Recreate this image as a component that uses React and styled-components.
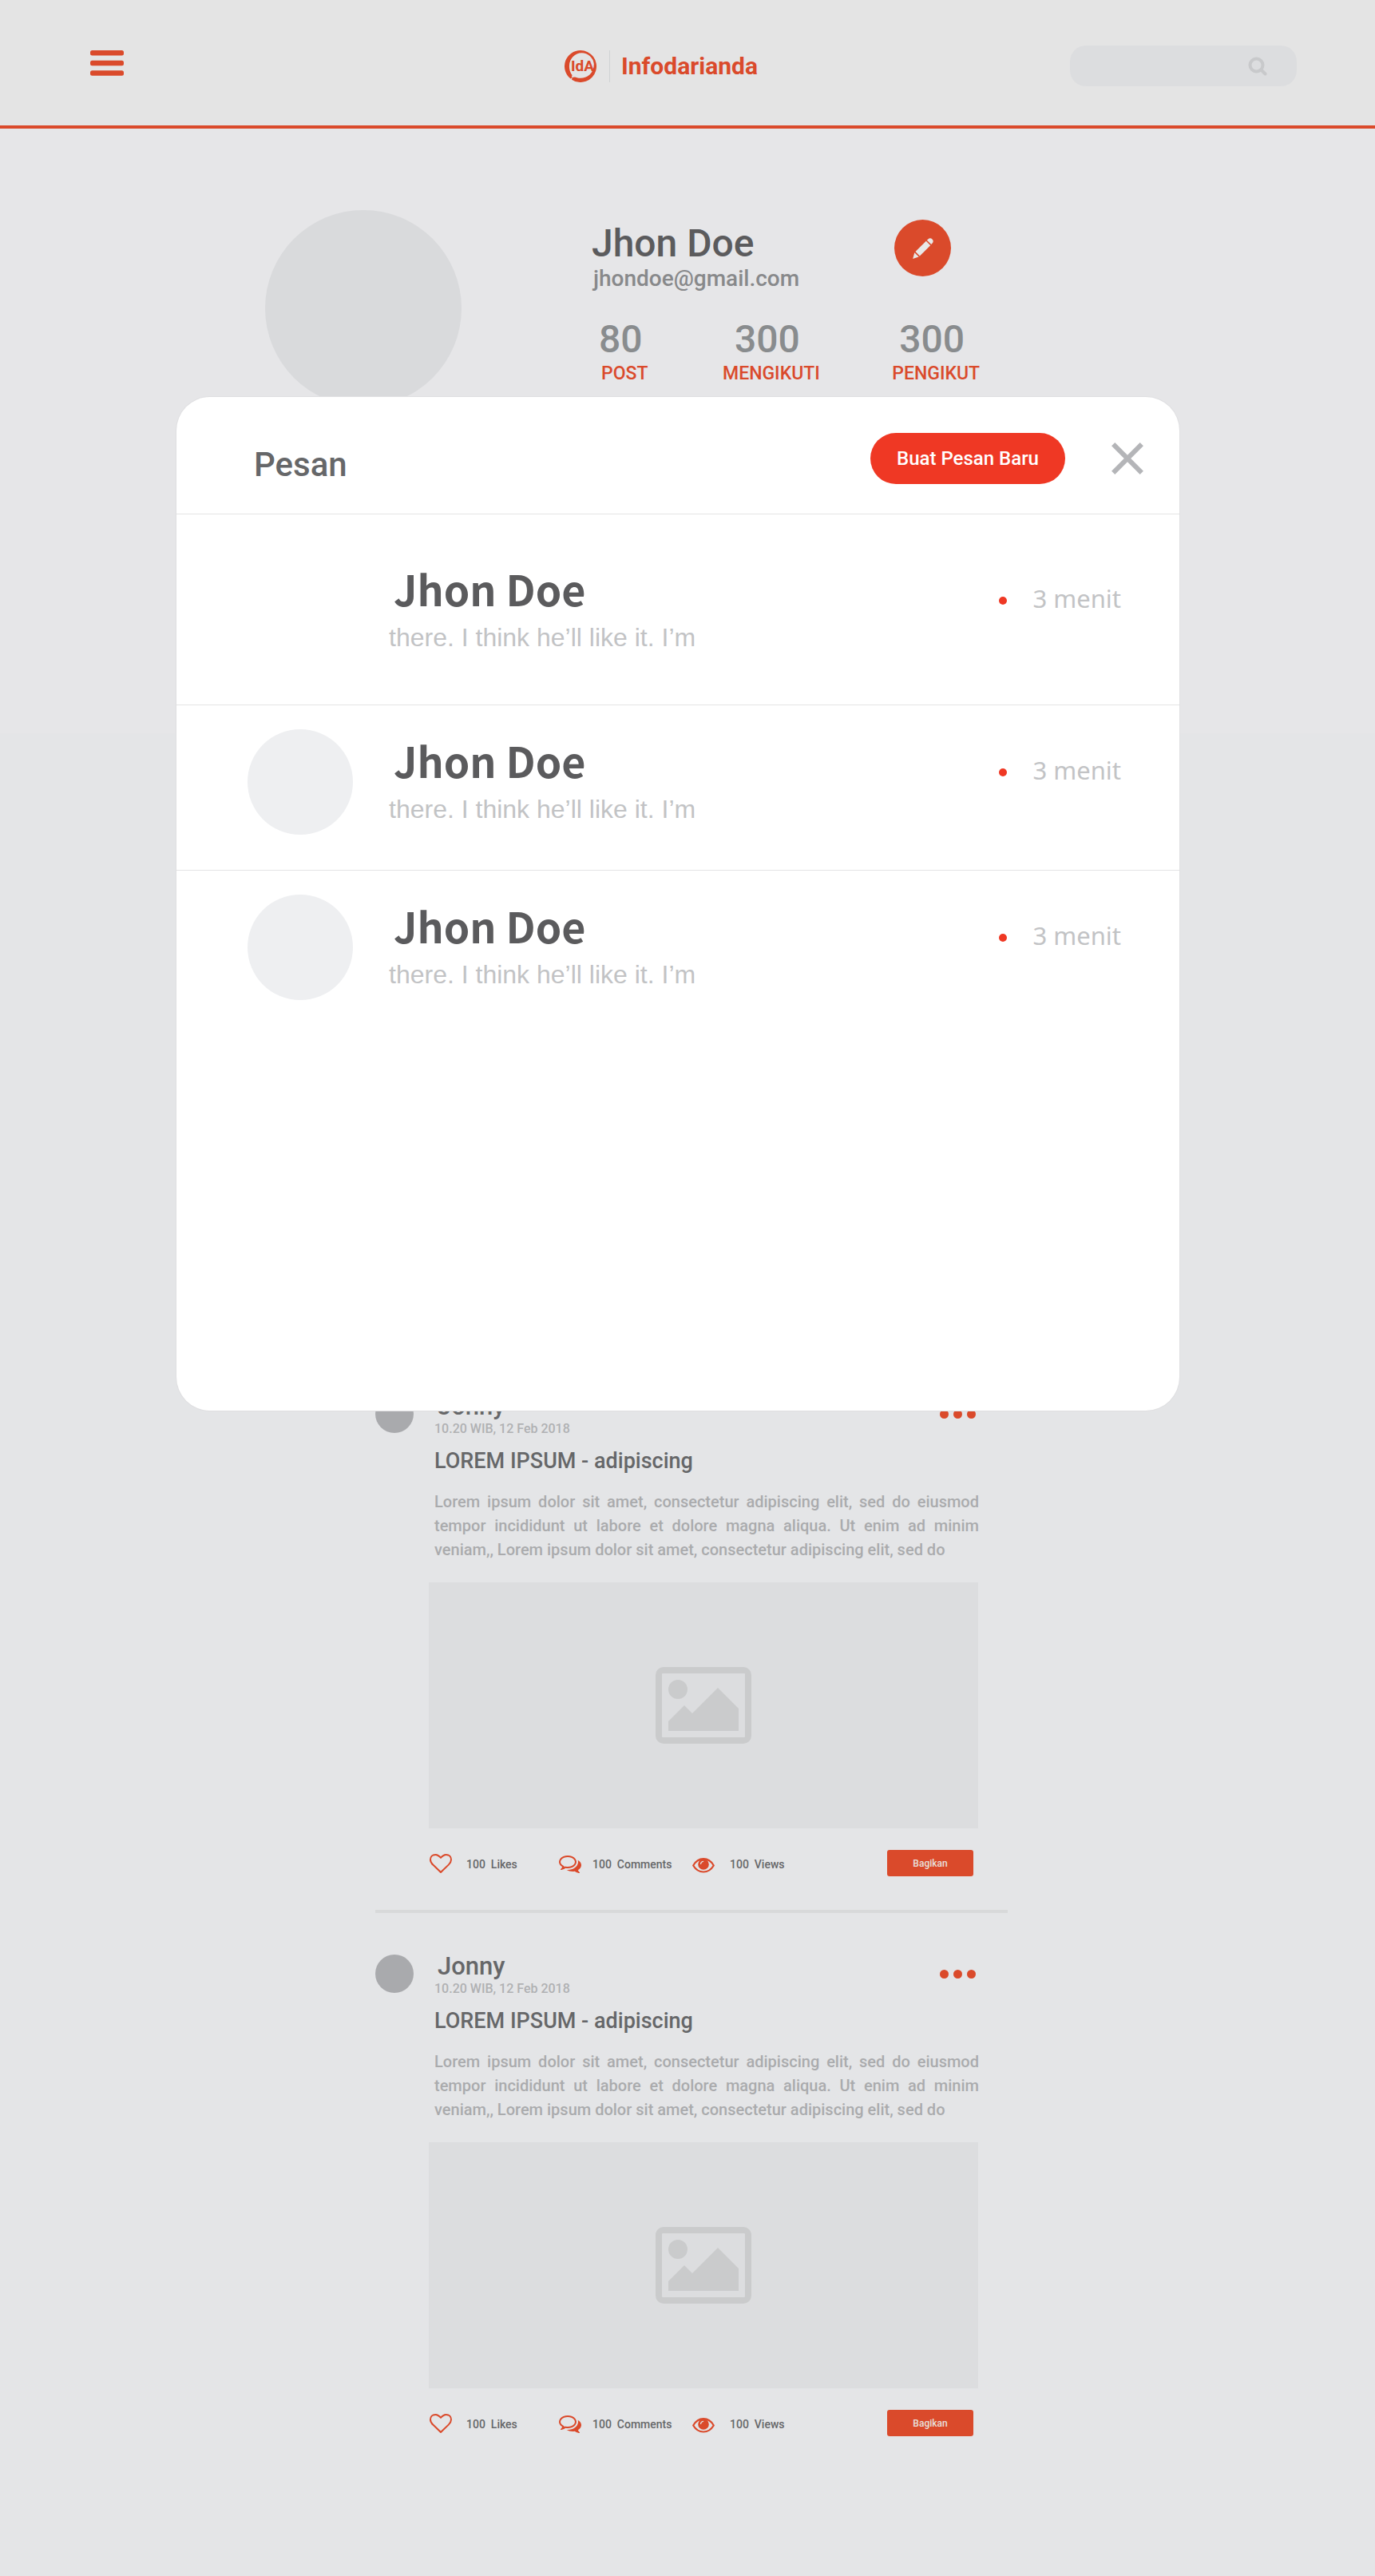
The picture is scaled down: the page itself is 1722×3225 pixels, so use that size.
import React from "react";
import styled, { createGlobalStyle } from "styled-components";

const color = {
  brand: "#da4a2b",
  brandBright: "#ef3824",
  ink: "#5b5b5d",
  inkSoft: "#666769",
  muted: "#88898b",
  faint: "#aaabad",
  pale: "#c2c3c5",
  panel: "#dcdddf",
};

const GlobalStyle = createGlobalStyle`
  *, *::before, *::after { box-sizing: border-box; }
  body {
    margin: 0;
    background: #e4e5e7;
    font-family: Roboto, "Liberation Sans", sans-serif;
    color: ${color.inkSoft};
  }
  h1, h2, h3, p, ul, dl, dd { margin: 0; padding: 0; }
  ul { list-style: none; }
  button, input { font-family: inherit; border: 0; padding: 0; }
  button { cursor: pointer; background: none; }
  svg { display: block; }
`;

const Page = styled.div`
  position: relative;
`;

/* Top bar */

const TopBar = styled.header`
  display: grid;
  grid-template-columns: 594px 1fr 284px;
  align-items: center;
  height: 161px;
  padding: 8px 98px 0 113px;
  background: #e4e4e4;
  border-bottom: 4px solid ${color.brand};
`;

const MenuButton = styled.button`
  justify-self: start;
  margin-bottom: 7px;
  color: ${color.brand};
`;

const Brand = styled.a`
  display: flex;
  align-items: center;
  justify-self: start;
  gap: 16px;
  color: ${color.brand};
  text-decoration: none;
`;

const BrandName = styled.span`
  padding-left: 14px;
  border-left: 1px solid #cfd3d4;
  font-size: 30px;
  font-weight: 700;
  line-height: 40px;
`;

const SearchForm = styled.form`
  display: flex;
  align-items: center;
  height: 51px;
  padding: 0 37px 0 20px;
  border-radius: 20px;
  background: ${color.panel};
`;

const SearchInput = styled.input`
  flex: 1;
  min-width: 0;
  height: 100%;
  background: transparent;
  outline: none;
  font-size: 20px;
  color: ${color.inkSoft};
`;

const IconButton = styled.button`
  color: ${(p) => p.$color};
`;

/* Profile */

const Profile = styled.section`
  display: flex;
  align-items: flex-start;
  min-height: 757px;
  padding: 102px 332px 0;
  background: #e6e6e8;
`;

const Circle = styled.div`
  flex: none;
  width: ${(p) => p.$size}px;
  height: ${(p) => p.$size}px;
  border-radius: 50%;
  background: ${(p) => p.$fill};
`;

const ProfileInfo = styled.div`
  display: flex;
  flex-direction: column;
  width: 486px;
  margin-left: 163px;
  padding-top: 12px;
`;

const ProfileHead = styled.div`
  display: flex;
  justify-content: space-between;
  padding-right: 36px;
`;

const ProfileName = styled.h1`
  margin-top: 2px;
  font-size: 48px;
  font-weight: 500;
  line-height: 56px;
  color: ${color.ink};
`;

const Email = styled.p`
  padding-left: 2px;
  font-size: 28px;
  font-weight: 500;
  line-height: 32px;
  color: ${color.muted};
`;

const EditButton = styled.button`
  display: grid;
  place-items: center;
  width: 71px;
  height: 71px;
  border-radius: 50%;
  background: ${color.brand};
  color: #e8e8e8;
`;

const Stats = styled.dl`
  display: flex;
  justify-content: space-between;
  padding-left: 9px;
  margin-top: 32px;
`;

const Stat = styled.div`
  display: flex;
  flex-direction: column-reverse;
  align-items: center;
`;

const StatLabel = styled.dt`
  font-size: 23px;
  font-weight: 500;
  line-height: 30px;
  color: ${color.brand};
`;

const StatValue = styled.dd`
  padding-right: 10px;
  font-size: 48px;
  font-weight: 500;
  line-height: 56px;
  color: #898c8e;
`;

/* Feed */

const Feed = styled.main`
  padding: 828px 0 175px 10px;
`;

const FeedList = styled.div`
  display: flex;
  flex-direction: column;
  max-width: 792px;
  margin: 0 auto;
`;

const Post = styled.article`
  display: flex;
  gap: 19px;
  padding-right: 37px;

  & + & {
    margin-top: 42px;
    padding-top: 52px;
    border-top: 4px solid #d8d9da;
  }
`;

const PostMain = styled.div`
  flex: 1;
  min-width: 0;
`;

const PostHead = styled.div`
  display: flex;
  align-items: center;
  justify-content: space-between;
  padding: 0 3px 0 7px;
`;

const Author = styled.h2`
  padding-left: 4px;
  font-size: 31px;
  font-weight: 500;
  line-height: 30px;
`;

const PostDate = styled.p`
  margin-top: 4px;
  font-size: 16px;
  font-weight: 500;
  line-height: 18px;
  color: #b0b1b3;
`;

const MoreButton = styled.button`
  display: flex;
  gap: 6px;
  margin-bottom: 3px;
`;

const PostTitle = styled.h3`
  margin-top: 15px;
  padding-left: 7px;
  font-size: 27px;
  font-weight: 500;
  line-height: 32px;
`;

const PostText = styled.p`
  margin-top: 20px;
  padding-left: 7px;
  margin-right: -1px;
  font-size: 20px;
  font-weight: 500;
  line-height: 30px;
  text-align: justify;
  color: ${color.faint};
`;

const PostImage = styled.div`
  display: grid;
  place-items: center;
  height: 308px;
  margin-top: 26px;
  background: ${color.panel};
  color: #cacbcc;
`;

const Actions = styled.div`
  display: flex;
  align-items: center;
  height: 33px;
  margin-top: 27px;
  padding-right: 6px;
`;

const Action = styled.button`
  display: flex;
  align-items: center;
  gap: ${(p) => p.$gap}px;
  width: ${(p) => p.$width}px;
  padding-left: 1px;
  color: ${color.brand};
`;

const ActionText = styled.span`
  padding-top: 2px;
  font-size: 14px;
  font-weight: 500;
  line-height: 18px;
  white-space: pre;
  color: ${color.inkSoft};
`;

const ShareButton = styled.button`
  width: 108px;
  height: 33px;
  margin-left: auto;
  border-radius: 3px;
  background: ${color.brand};
  font-size: 12px;
  font-weight: 500;
  color: #e8e0de;
`;

/* Message dialog */

const DialogLayer = styled.div`
  position: absolute;
  inset: 0;
  padding: 497px 245px 0 221px;
`;

const Dialog = styled.section`
  min-height: 1269px;
  border-radius: 42px;
  background: #fff;
  box-shadow: 0 0 0 1px #dfdfe1;
`;

const DialogHead = styled.div`
  display: flex;
  align-items: center;
  height: 146px;
  padding: 7px 45px 0 97px;
`;

const DialogTitle = styled.h2`
  flex: 1;
  padding-top: 16px;
  font-size: 42px;
  font-weight: 500;
  line-height: 48px;
`;

const NewMessageButton = styled.button`
  width: 244px;
  height: 64px;
  margin-right: 58px;
  border-radius: 32px;
  background: ${color.brandBright};
  font-size: 24px;
  font-weight: 500;
  color: #fff;
`;

const Message = styled.li`
  display: flex;
  align-items: flex-start;
  padding: ${(p) => (p.$tall ? "54px 73px 52px 89px" : "30px 73px 44px 89px")};
  border-top: 1px solid #e4e4e5;
`;

const MessageBody = styled.div`
  flex: 1;
  min-width: 0;
  padding: 9px 0 0 45px;
`;

const Sender = styled.h3`
  padding-left: 6px;
  font-family: "Noto Sans CJK SC", "Noto Sans", sans-serif;
  font-size: 52px;
  font-weight: 700;
  line-height: 60px;
  color: ${color.ink};
`;

const Excerpt = styled.p`
  margin-top: 11px;
  font-family: "Liberation Sans", sans-serif;
  font-size: 32px;
  line-height: 40px;
  color: ${color.pale};
`;

const MessageTime = styled.div`
  display: flex;
  align-items: center;
  gap: 32px;
  padding-top: 31px;
  font-family: "Noto Sans", sans-serif;
  font-size: 31px;
  line-height: 40px;
  color: ${color.pale};
`;

const UnreadDot = styled.span`
  width: 10px;
  height: 10px;
  margin-top: 6px;
  border-radius: 50%;
  background: ${color.brandBright};
`;

/* Icons */

const MenuIcon = () => (
  <svg width="42" height="32" viewBox="0 0 42 32" fill="currentColor" aria-hidden="true">
    <rect width="42" height="6.6" rx="2.5" />
    <rect y="12.7" width="42" height="6.6" rx="2.5" />
    <rect y="25.2" width="42" height="6.6" rx="2.5" />
  </svg>
);

const LogoMark = () => (
  <svg width="40" height="40" viewBox="0 0 40 40" aria-hidden="true">
    <path
      fill="currentColor"
      fillRule="evenodd"
      d="M20 0A20 20 0 1 1 9 36.700L10 33.500L7.500 35.600A20 20 0 0 1 20 0ZM21.500 3.200A16 16 0 0 0 6 19Q5.500 26 9.500 31L8.800 35Q12 32.500 15.500 34.200Q24 36.500 31.500 30.500Q37 25 36.800 17A15.500 15.500 0 0 0 21.500 3.200Z"
    />
    <text x="8" y="26" fill="currentColor" fontFamily="Roboto, sans-serif" fontSize="19" fontWeight="700">
      IdA
    </text>
  </svg>
);

const SearchIcon = () => (
  <svg width="24" height="24" viewBox="0 0 24 24" fill="none" stroke="currentColor" strokeWidth="4" aria-hidden="true">
    <circle cx="10.500" cy="10.500" r="8" />
    <path d="M16.500 16.500l5 5" strokeLinecap="round" />
  </svg>
);

const PencilIcon = () => (
  <svg width="28" height="28" viewBox="0 0 28 28" fill="currentColor" aria-hidden="true">
    <path d="M20.300 2.500Q23 0 25.500 2.500T25.400 7.800L24.300 8.900L18.800 3.700Z" />
    <path d="M17.800 4.800L23.200 10.200L9.900 23.500L4.500 18.100Z" />
    <path d="M3.300 19.200L8.700 24.600L1.200 27Z" />
  </svg>
);

const HeartIcon = () => (
  <svg width="28" height="28" viewBox="0 0 1792 1792" fill="currentColor" aria-hidden="true">
    <path d="M1664 596q0-81-21.5-143t-55-98.5-81.5-59.5-94-31-98-8-112 25.5-110.500 64-86.500 72-60 61.500q-18 22-49 22t-49-22q-24-28-60-61.500t-86.500-72-110.500-64-112-25.500-98 8-94 31-81.500 59.500-55 98.500-21.500 143q0 168 187 355l581 560 580-559q188-188 188-356zm128 0q0 221-229 450l-623 600q-18 18-44 18t-44-18l-624-602q-10-8-27.500-26t-55.500-65.500-68-97.500-53.500-121-23.500-138q0-220 127-344t351-124q62 0 126.500 21.500t120 58 95.500 68.500 76 68q36-36 76-68t95.500-68.500 120-58 126.500-21.500q224 0 351 124t127 344z" />
  </svg>
);

const CommentsIcon = () => (
  <svg width="28" height="28" viewBox="0 0 1792 1792" fill="currentColor" aria-hidden="true">
    <path d="M704 384q-153 0-286 52t-211.500 141-78.500 191q0 82 53 158t149 132l97 56-35 84q34-20 62-39l44-31 53 10q78 14 153 14 153 0 286-52t211.500-141 78.500-191-78.500-191-211.500-141-286-52zm0-128q191 0 353.500 68.500t256.500 186.500 94 257-94 257-256.500 186.500-353.500 68.500q-86 0-176-16-124 88-278 128-36 9-86 16h-3q-11 0-20.500-8t-11.500-21q-1-3-1-6.500t.5-6.500 2-6l2.500-5 3.500-5.500 4-5 4.500-5 4-4.500q5-6 23-25t26-29.500 22.500-29 25-38.500 20.500-44q-124-72-195-177t-71-224q0-139 94-257t256.500-186.500 353.500-68.500zm822 1169q10 24 20.500 44t25 38.500 22.500 29 26 29.500 23 25q1 1 4 4.500t4.500 5 4 5 3.500 5.500l2.500 5 2 6 .5 6.500-1 6.500q-3 14-13 22t-22 7q-50-7-86-16-154-40-278-128-90 16-176 16-271 0-472-132 58 4 88 4 161 0 309-45t264-129q125-92 192-212t67-254q0-77-23-152 129 71 204 178t75 230q0 120-71 224.500t-195 176.500z" />
  </svg>
);

const EyeIcon = () => (
  <svg width="28" height="28" viewBox="0 0 28 28" fill="none" stroke="currentColor" aria-hidden="true">
    <path d="M1.200 16.500Q6 8.200 14 8.200T26.800 16.500Q22 24.500 14 24.500T1.200 16.500Z" strokeWidth="2.200" strokeLinejoin="round" />
    <circle cx="14" cy="15" r="6.800" fill="currentColor" stroke="none" />
    <path d="M10.600 14.500Q10.800 11.700 13.600 11.300" stroke="#e4e5e7" strokeWidth="1.200" strokeLinecap="round" />
  </svg>
);

const PictureIcon = () => (
  <svg width="120" height="96" viewBox="0 0 120 96" fill="currentColor" aria-hidden="true">
    <path fillRule="evenodd" d="M10 0H110A10 10 0 0 1 120 10V86A10 10 0 0 1 110 96H10A10 10 0 0 1 0 86V10A10 10 0 0 1 10 0ZM9 8Q8 8 8 9V87Q8 88 9 88H111Q112 88 112 87V9Q112 8 111 8Z" />
    <circle cx="28" cy="28" r="12" />
    <path d="M16 68L36 48L46 58L78 26L104 52V80H16Z" />
  </svg>
);

const CloseIcon = () => (
  <svg width="40" height="40" viewBox="0 0 40 40" fill="none" stroke="currentColor" strokeWidth="6" aria-hidden="true">
    <path d="M2.200 2.200L37.800 37.800M37.800 2.200L2.200 37.800" />
  </svg>
);

/* Data */

const stats = [
  { label: "POST", value: 80 },
  { label: "MENGIKUTI", value: 300 },
  { label: "PENGIKUT", value: 300 },
];

const actions = [
  { Icon: HeartIcon, text: "100  Likes", gap: 18, width: 162 },
  { Icon: CommentsIcon, text: "100  Comments", gap: 14, width: 167 },
  { Icon: EyeIcon, text: "100  Views", gap: 19, width: 130 },
];

const posts = [1, 2];

const messages = [
  { id: 1, tall: true, avatar: "transparent" },
  { id: 2, avatar: "#eeeff1" },
  { id: 3, avatar: "#eeeff1" },
];

function PostCard() {
  return (
    <Post>
      <Circle $size={48} $fill="#a9aaad" />
      <PostMain>
        <PostHead>
          <div>
            <Author>Jonny</Author>
            <PostDate>10.20 WIB, 12 Feb 2018</PostDate>
          </div>
          <MoreButton type="button" aria-label="Lainnya">
            {[0, 1, 2].map((n) => (
              <Circle key={n} as="span" $size={11} $fill={color.brand} />
            ))}
          </MoreButton>
        </PostHead>
        <PostTitle>LOREM IPSUM - adipiscing</PostTitle>
        <PostText>
          Lorem ipsum dolor sit amet, consectetur adipiscing elit, sed do eiusmod tempor incididunt ut
          labore et dolore magna aliqua. Ut enim ad minim veniam,, Lorem ipsum dolor sit amet,
          consectetur adipiscing elit, sed do
        </PostText>
        <PostImage>
          <PictureIcon />
        </PostImage>
        <Actions>
          {actions.map(({ Icon, text, gap, width }) => (
            <Action key={text} type="button" $gap={gap} $width={width}>
              <Icon />
              <ActionText>{text}</ActionText>
            </Action>
          ))}
          <ShareButton type="button">Bagikan</ShareButton>
        </Actions>
      </PostMain>
    </Post>
  );
}

export default function App() {
  return (
    <Page>
      <GlobalStyle />
      <TopBar>
        <MenuButton type="button" aria-label="Menu">
          <MenuIcon />
        </MenuButton>
        <Brand href="#">
          <LogoMark />
          <BrandName>Infodarianda</BrandName>
        </Brand>
        <SearchForm role="search">
          <SearchInput type="search" aria-label="Cari" />
          <IconButton type="submit" aria-label="Cari" $color="#c8c9cb">
            <SearchIcon />
          </IconButton>
        </SearchForm>
      </TopBar>

      <Profile>
        <Circle $size={246} $fill="#d9dadc" />
        <ProfileInfo>
          <ProfileHead>
            <div>
              <ProfileName>Jhon Doe</ProfileName>
              <Email>jhondoe@gmail.com</Email>
            </div>
            <EditButton type="button" aria-label="Ubah profil">
              <PencilIcon />
            </EditButton>
          </ProfileHead>
          <Stats>
            {stats.map((s) => (
              <Stat key={s.label}>
                <StatLabel>{s.label}</StatLabel>
                <StatValue>{s.value}</StatValue>
              </Stat>
            ))}
          </Stats>
        </ProfileInfo>
      </Profile>

      <Feed>
        <FeedList>
          {posts.map((id) => (
            <PostCard key={id} />
          ))}
        </FeedList>
      </Feed>

      <DialogLayer>
        <Dialog role="dialog" aria-labelledby="pesan">
          <DialogHead>
            <DialogTitle id="pesan">Pesan</DialogTitle>
            <NewMessageButton type="button">Buat Pesan Baru</NewMessageButton>
            <IconButton type="button" aria-label="Tutup" $color="#b4b5b8">
              <CloseIcon />
            </IconButton>
          </DialogHead>
          <ul>
            {messages.map((m) => (
              <Message key={m.id} $tall={m.tall}>
                <Circle $size={132} $fill={m.avatar} />
                <MessageBody>
                  <Sender>Jhon Doe</Sender>
                  <Excerpt>there. I think he’ll like it. I’m</Excerpt>
                </MessageBody>
                <MessageTime>
                  <UnreadDot />
                  <span>3 menit</span>
                </MessageTime>
              </Message>
            ))}
          </ul>
        </Dialog>
      </DialogLayer>
    </Page>
  );
}
